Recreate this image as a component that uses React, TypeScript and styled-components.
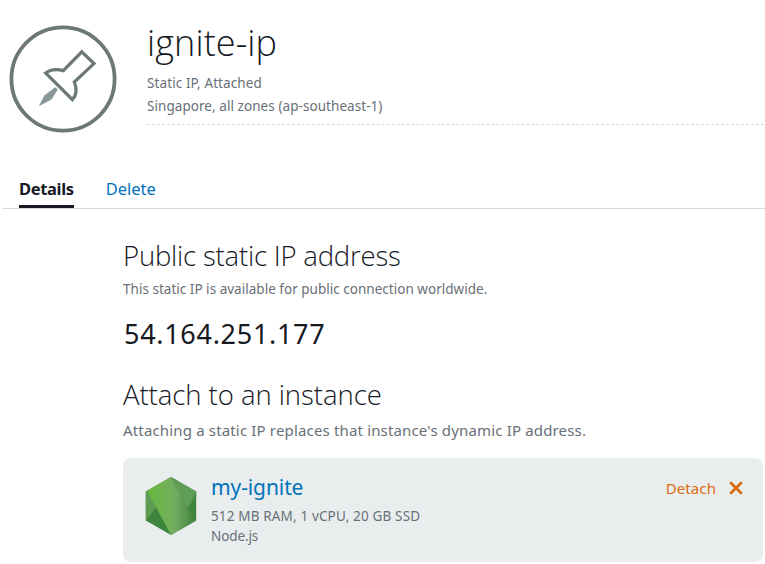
import React from 'react';
import styled, { createGlobalStyle } from 'styled-components';

const GlobalStyle = createGlobalStyle`
  * { box-sizing: border-box; }
  body {
    margin: 0;
    background: #fff;
    color: #16191f;
    font-family: "Noto Sans", "Open Sans", sans-serif;
    overflow: hidden;
  }
  h1, h2, p { margin: 0; }
`;

const Page = styled.div`
  width: 765px;
  height: 564px;
  overflow: hidden;
`;

const Header = styled.header`
  display: flex;
  height: 125px;
`;

const PinIcon = styled.svg`
  flex: none;
  width: 110px;
  height: 110px;
  margin: 24px 29px 0 8px;
`;

const HeaderText = styled.div`
  width: 617px;
  padding-top: 19px;
  border-bottom: 1px dashed #d5dbdb;
`;

const Title = styled.h1`
  height: 53px;
  font: 300 36px/48px "Open Sans", sans-serif;
  letter-spacing: 0.1px;
`;

const Meta = styled.p<{ $line: number; $spacing?: number }>`
  color: #687078;
  font-size: 13.5px;
  line-height: ${p => p.$line}px;
  letter-spacing: ${p => p.$spacing ?? 0.06}px;
  white-space: nowrap;
`;

const Tabs = styled.nav`
  display: flex;
  gap: 32px;
  height: 84px;
  margin-left: 3px;
  padding: 49px 0 0 16px;
  border-bottom: 1px solid #d5dbdb;
`;

const Tab = styled.a<{ $active?: boolean }>`
  height: 34px;
  color: ${p => (p.$active ? '#16191f' : '#0073bb')};
  border-bottom: ${p => (p.$active ? '3px solid #16191f' : 'none')};
  font-size: 16.5px;
  font-weight: ${p => (p.$active ? 700 : 400)};
  letter-spacing: ${p => (p.$active ? '-0.35px' : '0')};
  line-height: 30px;
`;

const Content = styled.main`
  width: 640px;
  margin-left: 123px;
  padding-top: 27px;
`;

const Heading = styled.h2<{ $spacing?: number }>`
  font: 300 27.5px/40px "Open Sans", sans-serif;
  letter-spacing: ${p => p.$spacing ?? -0.05}px;
  white-space: nowrap;
`;

const Address = styled.p`
  margin: 13px 0 22px 1px;
  font-size: 27px;
  line-height: 38px;
  letter-spacing: 0.7px;
`;

const Hint = styled.p`
  margin-top: 3px;
  color: #687078;
  font-size: 15px;
  line-height: 24px;
  letter-spacing: 0.16px;
  white-space: nowrap;
`;

const InstanceCard = styled.section`
  display: flex;
  height: 104px;
  margin-top: 16px;
  padding: 18px 20px 0 22px;
  border-radius: 8px;
  background: #e9eded;
`;

const NodeLogo = styled.svg`
  flex: none;
  width: 52px;
  height: 60px;
  margin: 1px 14px 0 0;
`;

const InstanceInfo = styled.div`
  flex: 1;
`;

const InstanceName = styled.a`
  display: block;
  height: 30px;
  color: #0073bb;
  font-size: 21px;
  line-height: 22px;
  letter-spacing: -0.1px;
`;

const DetachButton = styled.button`
  display: flex;
  align-items: center;
  gap: 13px;
  height: 24px;
  padding: 0;
  border: 0;
  background: none;
  color: #dd6b10;
  font: 400 15px/24px "Noto Sans", sans-serif;
  letter-spacing: 0.1px;
`;

export default function App() {
  return (
    <Page>
      <GlobalStyle />
      <Header>
        <PinIcon viewBox="0 0 110 110" fill="none">
          <circle cx="55" cy="55" r="51.6" stroke="#6b7877" strokeWidth="3.8" />
          <path
            d="M73.8 27.8 86 39.6 66.3 58Q70.8 69 64.4 75.6L37.6 49Q44.5 43.6 55.3 46.6Z"
            stroke="#6b7877"
            strokeWidth="3.2"
          />
          <path d="M46.8 63.4Q48.6 63.4 49.7 65.8L43.5 75.5 30.8 82.2 36.3 71.5Z" fill="#8b989a" />
        </PinIcon>
        <HeaderText>
          <Title>ignite-ip</Title>
          <Meta $line={23} $spacing={0.1}>Static IP, Attached</Meta>
          <Meta $line={23}>Singapore, all zones (ap-southeast-1)</Meta>
        </HeaderText>
      </Header>
      <Tabs>
        <Tab $active>Details</Tab>
        <Tab>Delete</Tab>
      </Tabs>
      <Content>
        <Heading $spacing={-0.2}>Public static IP address</Heading>
        <Meta $line={26} $spacing={0.02}>This static IP is available for public connection worldwide.</Meta>
        <Address>54.164.251.177</Address>
        <Heading>Attach to an instance</Heading>
        <Hint>Attaching a static IP replaces that instance's dynamic IP address.</Hint>
        <InstanceCard>
          <NodeLogo viewBox="0 0 52 60">
            <defs>
              <linearGradient id="band" x1="0" x2="1" y1="0" y2="0">
                <stop offset="0" stopColor="#65ba3e" />
                <stop offset=".5" stopColor="#74ae5c" />
                <stop offset=".62" stopColor="#70a860" />
                <stop offset="1" stopColor="#3e823b" />
              </linearGradient>
              <linearGradient id="top" x1="0" x2="1" y1="0" y2="0">
                <stop offset="0" stopColor="#5d9c50" />
                <stop offset="1" stopColor="#619f5c" />
              </linearGradient>
            </defs>
            <path d="M26 0 51.2 14.5V43.5L26 58 .8 43.5V14.5Z" fill="#3e863d" />
            <path d="M.8 14.5 3 13 12 29 .8 43.5Z" fill="#5f9c53" />
            <path d="M26 0 51.2 14.5 42.5 32Z" fill="url(#top)" />
            <path d="M51.2 14.5V20L42.5 32Z" fill="#478c45" />
            <path d="M26 0 42.5 31 50.2 44.1 26 58 2.2 13.7Z" fill="url(#band)" />
          </NodeLogo>
          <InstanceInfo>
            <InstanceName>my-ignite</InstanceName>
            <Meta $line={20} $spacing={0.15}>512 MB RAM, 1 vCPU, 20 GB SSD</Meta>
            <Meta $line={20} $spacing={-0.1}>Node.js</Meta>
          </InstanceInfo>
          <DetachButton>
            Detach
            <svg width="14" height="14" viewBox="0 0 14 14" stroke="currentColor" strokeWidth="2.8" strokeLinecap="round">
              <path d="M2 2 12 12M12 2 2 12" />
            </svg>
          </DetachButton>
        </InstanceCard>
      </Content>
    </Page>
  );
}
